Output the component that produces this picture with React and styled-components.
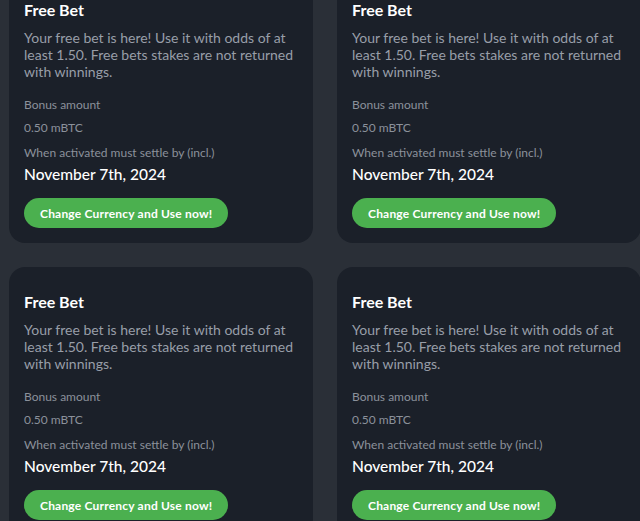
import styled, { createGlobalStyle } from "styled-components";

const GlobalStyle = createGlobalStyle`
    body {
        margin: 0;
        background: #2a2f37;
        overflow: hidden;
        font-family: "Lato", "Liberation Sans", sans-serif;
    }
`;

const Grid = styled.div`
    display: grid;
    grid-template-columns: repeat(2, 304px);
    gap: 24px;
    padding: 0 9px;
    margin-top: -25px;
`;

const Card = styled.div`
    display: flex;
    flex-direction: column;
    align-items: flex-start;
    background: #1b2029;
    border-radius: 16px;
    padding: 24px 15px 15px;
`;

const Title = styled.h3`
    margin: 0;
    font-size: 16px;
    font-weight: 700;
    line-height: 22px;
    color: #ffffff;
`;

const Description = styled.p`
    margin: 8px 0 0;
    font-size: 14px;
    line-height: 17px;
    color: #989ea8;
`;

const Label = styled.div`
    margin-top: ${(p) => p.$gap}px;
    font-size: 12px;
    line-height: 20px;
    color: #8b919b;
`;

const DateText = styled.div`
    font-size: 15.5px;
    font-weight: 500;
    line-height: 22px;
    color: #ffffff;
`;

const UseButton = styled.button`
    margin-top: 13px;
    height: 30px;
    padding: 0 16px;
    border: none;
    border-radius: 15px;
    background: #4bb04f;
    color: #ffffff;
    font-family: inherit;
    font-size: 12px;
    font-weight: 700;
    letter-spacing: 0.2px;
    cursor: pointer;
`;

const bets = [1, 2, 3, 4];

function FreeBetCard() {
    return (
        <Card>
            <Title>Free Bet</Title>
            <Description>
                Your free bet is here! Use it with odds of at least 1.50. Free
                bets stakes are not returned with winnings.
            </Description>
            <Label $gap={15}>Bonus amount</Label>
            <Label $gap={3}>0.50 mBTC</Label>
            <Label $gap={5}>When activated must settle by (incl.)</Label>
            <DateText>November 7th, 2024</DateText>
            <UseButton>Change Currency and Use now!</UseButton>
        </Card>
    );
}

export default function App() {
    return (
        <>
            <GlobalStyle />
            <Grid>
                {bets.map((id) => (
                    <FreeBetCard key={id} />
                ))}
            </Grid>
        </>
    );
}
